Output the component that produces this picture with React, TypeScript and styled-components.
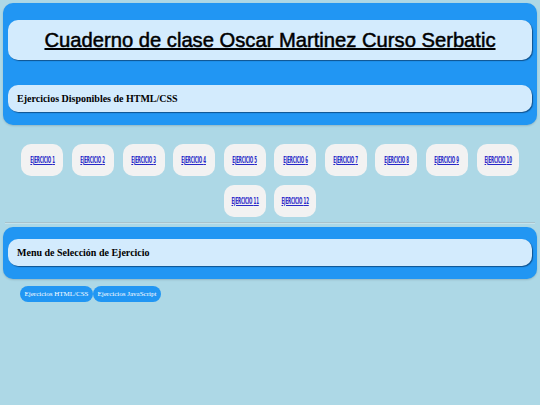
import React from "react";
import styled, { createGlobalStyle } from "styled-components";

const Global = createGlobalStyle`
  html, body { margin: 0; padding: 0; }
  body {
    background: #add8e6;
    font-family: "Liberation Serif", "Times New Roman", serif;
  }
  #root { padding: 3px; }
`;

const BluePanel = styled.section<{ $pad: string }>`
  background: #2196f3;
  border-radius: 10px;
  padding: ${(p) => p.$pad};
  display: flex;
  flex-direction: column;
  box-shadow: 0 1px 2px rgba(0, 0, 0, 0.15);
`;

const InnerBox = styled.div<{ $h: number; $mt?: number }>`
  background: #d3ebfd;
  border-radius: 10px;
  height: ${(p) => p.$h}px;
  margin-top: ${(p) => p.$mt ?? 0}px;
  display: flex;
  align-items: center;
  box-shadow: 1px 1px 1px rgba(10, 60, 110, 0.75);
`;

const Title = styled.h1`
  margin: 0;
  width: 100%;
  text-align: center;
  font-family: "Liberation Sans", Arial, sans-serif;
  font-size: 20.2px;
  font-weight: normal;
  text-decoration: underline;
  text-decoration-thickness: 1.5px;
  color: #000;
  -webkit-text-stroke: 0.5px #000;
`;

const Subtitle = styled.h2`
  margin: 0 0 0 9px;
  font-family: "Liberation Serif", "Times New Roman", serif;
  font-size: 10px;
  font-weight: bold;
  color: #000;
`;

const Grid = styled.nav`
  display: flex;
  flex-wrap: wrap;
  justify-content: center;
  padding: 15px 0 0;
`;

const ExButton = styled.div`
  width: 42px;
  height: 32px;
  margin: 4px 4.3px 4.5px;
  background: #f2f2f2;
  border-radius: 10px;
  display: flex;
  align-items: center;
  justify-content: center;
`;

const ExLink = styled.a`
  font-family: "DejaVu Sans Condensed", "DejaVu Sans", sans-serif;
  font-size: 8.5px;
  font-weight: bold;
  letter-spacing: -0.3px;
  text-transform: uppercase;
  color: #2828c8;
  text-decoration: underline;
  white-space: nowrap;
  transform: scaleX(0.52);
`;

const Rule = styled.hr`
  margin: 1px 2px 3px;
  border: none;
  border-top: 1px solid #a9c3cc;
  border-bottom: 1px solid #c4e3ec;
`;

const Pills = styled.div`
  display: flex;
  gap: 0;
  padding: 7px 0 0 17px;
`;

const Pill = styled.button`
  background: #2196f3;
  color: #fff;
  border: none;
  margin: 0;
  border-radius: 8px;
  height: 16px;
  padding: 0 4.5px;
  font-family: "Liberation Serif", "Times New Roman", serif;
  font-size: 7px;
`;

export default function App() {
  const items = Array.from({ length: 12 }, (_, i) => i + 1);
  return (
    <>
      <Global />
      <BluePanel $pad="17px 5px 13px">
        <InnerBox $h={40}>
          <Title>Cuaderno de clase Oscar Martinez Curso Serbatic</Title>
        </InnerBox>
        <InnerBox $h={27} $mt={25}>
          <Subtitle>Ejercicios Disponibles de HTML/CSS</Subtitle>
        </InnerBox>
      </BluePanel>
      <Grid>
        {items.map((n) => (
          <ExButton key={n}>
            <ExLink href="#">Ejercicio {n}</ExLink>
          </ExButton>
        ))}
      </Grid>
      <Rule />
      <BluePanel $pad="12px 5px 13px">
        <InnerBox $h={27}>
          <Subtitle>Menu de Selección de Ejercicio</Subtitle>
        </InnerBox>
      </BluePanel>
      <Pills>
        <Pill>Ejercicios HTML/CSS</Pill>
        <Pill>Ejercicios JavaScript</Pill>
      </Pills>
    </>
  );
}
